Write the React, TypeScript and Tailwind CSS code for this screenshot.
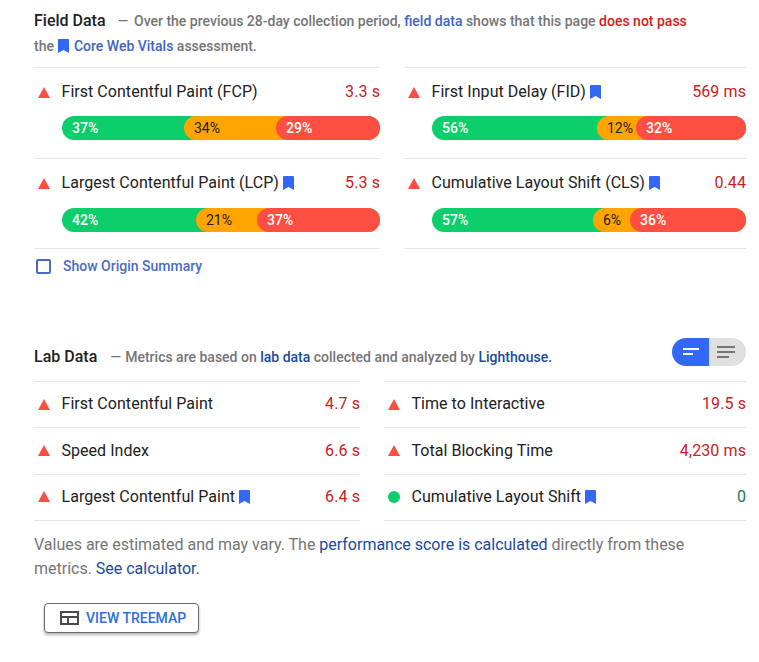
const Bookmark = ({ className }: { className: string }) => (
  <svg viewBox="0 0 11 14" className={className} fill="#3367f5">
    <path d="M1 0h9a1 1 0 0 1 1 1v13l-5.5-3L0 14V1a1 1 0 0 1 1-1z" />
  </svg>
);

const Triangle = () => (
  <svg viewBox="0 0 12 11" className="w-3 h-[11px] shrink-0" fill="#ff4e42">
    <path d="M6 0l6 11H0z" />
  </svg>
);

const Circle = () => <span className="w-3 h-3 rounded-full bg-[#0cce6b] shrink-0" />;

interface FieldMetric {
  name: string;
  marked?: boolean;
  value: string;
  pct: [string, string, string];
  // px from the bar start to the amber and from amber to the red segment
  widths: [number, number];
}

const fieldMetrics: FieldMetric[] = [
  { name: 'First Contentful Paint (FCP)', value: '3.3 s', pct: ['37%', '34%', '29%'], widths: [122, 92] },
  { name: 'First Input Delay (FID)', marked: true, value: '569 ms', pct: ['56%', '12%', '32%'], widths: [165, 39] },
  { name: 'Largest Contentful Paint (LCP)', marked: true, value: '5.3 s', pct: ['42%', '21%', '37%'], widths: [134, 61] },
  { name: 'Cumulative Layout Shift (CLS)', marked: true, value: '0.44', pct: ['57%', '6%', '36%'], widths: [161, 37] },
];

const labLeft = [
  { name: 'First Contentful Paint', value: '4.7 s' },
  { name: 'Speed Index', value: '6.6 s' },
  { name: 'Largest Contentful Paint', value: '6.4 s', marked: true },
];

const labRight = [
  { name: 'Time to Interactive', value: '19.5 s' },
  { name: 'Total Blocking Time', value: '4,230 ms' },
  { name: 'Cumulative Layout Shift', value: '0', marked: true, good: true },
];

function FieldCard({ m, lower }: { m: FieldMetric; lower?: boolean }) {
  return (
    <div className={`border-t border-[#e4e6e9] ${lower ? 'h-[90px]' : 'h-[91px]'}`}>
      <div className={`flex items-center ${lower ? 'h-[49px] pb-[1px]' : 'h-[48px]'}`}>
        <span className="w-[27.5px] pl-1 flex"><Triangle /></span>
        <span className="text-[#212121] tracking-[0.04px]">{m.name}</span>
        {m.marked && <Bookmark className="w-[11px] h-[14px] ml-1" />}
        <span className="ml-auto text-[#c9201e] tracking-[0.1px]">{m.value}</span>
      </div>
      <div className="ml-[28px] h-6 rounded-full overflow-hidden bg-[#0cce6b] flex text-sm leading-[24px] font-medium text-white">
        <span className="pl-[10px] shrink-0" style={{ width: m.widths[0] }}>{m.pct[0]}</span>
        <div className="flex-1 flex bg-[#ffa400] rounded-l-full">
          <span className="pl-[10px] shrink-0 font-normal text-[#212121]" style={{ width: m.widths[1] }}>{m.pct[1]}</span>
          <div className="flex-1 bg-[#ff4e42] rounded-l-full pl-[10px]">{m.pct[2]}</div>
        </div>
      </div>
    </div>
  );
}

function LabRow({ name, value, marked, good }: { name: string; value: string; marked?: boolean; good?: boolean }) {
  return (
    <div className="h-[46.4px] pb-[1px] border-t border-[#e4e6e9] flex items-center">
      <span className="w-[27.5px] pl-1 flex">{good ? <Circle /> : <Triangle />}</span>
      <span className="text-[#212121] tracking-[0.04px]">{name}</span>
      {marked && <Bookmark className="w-[11px] h-[14px] ml-1" />}
      <span className={`ml-auto tracking-[0.1px] ${good ? 'text-[#0d7d4d]' : 'text-[#c9201e]'}`}>{value}</span>
    </div>
  );
}

export default function App() {
  return (
    <div className="w-[759px] h-[662px] bg-white pl-[34px] pr-[13px] pt-[9px] overflow-hidden font-['Roboto',sans-serif] text-base">
      <div className="text-sm leading-[25px] font-medium text-[#757575] h-[49px]">
        <span className="text-base text-[#212121]">Field Data</span>
        <span className="ml-3 mr-[2px] font-normal">—</span>{' '}
        Over the previous 28-day collection period, <span className="text-[#3f63c4]">field data</span> shows that this page{' '}
        <span className="text-[#d81b1b]">does not pass</span>
        <br />
        the{' '}
        <Bookmark className="inline w-[11px] h-[14px] mx-[1px] align-[-2px]" />{' '}
        <span className="text-[#3f63c4]">Core Web Vitals</span> assessment.
      </div>

      <div className="mt-[9px] grid grid-cols-[346px_342px] gap-x-6">
        <div>
          <FieldCard m={fieldMetrics[0]} />
          <FieldCard m={fieldMetrics[2]} lower />
          <div className="border-t border-[#e4e6e9]" />
        </div>
        <div>
          <FieldCard m={fieldMetrics[1]} />
          <FieldCard m={fieldMetrics[3]} lower />
          <div className="border-t border-[#e4e6e9]" />
        </div>
      </div>

      <div className="mt-[7px] flex items-center h-5 pl-[2px]">
        <span className="w-[15px] h-[15px] border-2 border-[#4a6bc5] rounded-[2px]" />
        <span className="ml-3 -mt-[1px] text-sm font-medium text-[#4a6bc5]">Show Origin Summary</span>
      </div>

      <div className="mt-[60px] flex items-center h-[45px]">
        <div className="text-sm font-medium text-[#757575] flex items-center mb-[3px]">
          <span className="text-base text-[#212121]">Lab Data</span>
          <span className="ml-[13px] mr-[4px] font-normal">—</span>
          <span>
            Metrics are based on <span className="text-[#1a4a9c]">lab data</span> collected and analyzed by{' '}
            <span className="text-[#1a4a9c]">Lighthouse.</span>
          </span>
        </div>
        <div className="ml-auto mb-[14px] flex h-7">
          <div className="w-[37px] bg-[#3367f5] rounded-l-full flex flex-col justify-center items-center gap-[3px] pl-[1px]">
            <span className="w-4 h-[2px] bg-white" />
            <span className="w-[10px] h-[2px] bg-white mr-[6px]" />
          </div>
          <div className="w-[37px] bg-[#e0e0e0] rounded-r-full flex flex-col justify-center gap-[3px] pl-2">
            <span className="w-[18px] h-[2px] bg-[#757575]" />
            <span className="w-[18px] h-[2px] bg-[#757575]" />
            <span className="w-3 h-[2px] bg-[#757575]" />
          </div>
        </div>
      </div>

      <div className="grid grid-cols-[326px_362px] gap-x-6">
        <div className="border-b border-[#e4e6e9]">
          {labLeft.map((r) => <LabRow key={r.name} {...r} />)}
        </div>
        <div className="border-b border-[#e4e6e9]">
          {labRight.map((r) => <LabRow key={r.name} {...r} />)}
        </div>
      </div>

      <p className="mt-3 text-base leading-6 text-[#757575] tracking-[-0.01px]">
        Values are estimated and may vary. The <span className="text-[#1a4a9c]">performance score is calculated</span> directly from these
        <br />
        metrics. <span className="text-[#1a4a9c]">See calculator.</span>
      </p>

      <button className="mt-[22px] ml-[10px] w-[155px] h-[30px] flex items-center rounded-[4px] border border-[#6b6b6b] bg-white shadow-[0_2px_3px_rgba(0,0,0,0.3)] pl-[15px]">
        <svg viewBox="0 0 19 14" className="w-[19px] h-[14px]" fill="none" stroke="#4a4a4a" strokeWidth="2">
          <path d="M1 1h17v12H1zM1 6h17M8 6v7" />
        </svg>
        <span className="ml-[7px] text-sm font-medium text-[#2a6fdb]">VIEW TREEMAP</span>
      </button>
    </div>
  );
}
